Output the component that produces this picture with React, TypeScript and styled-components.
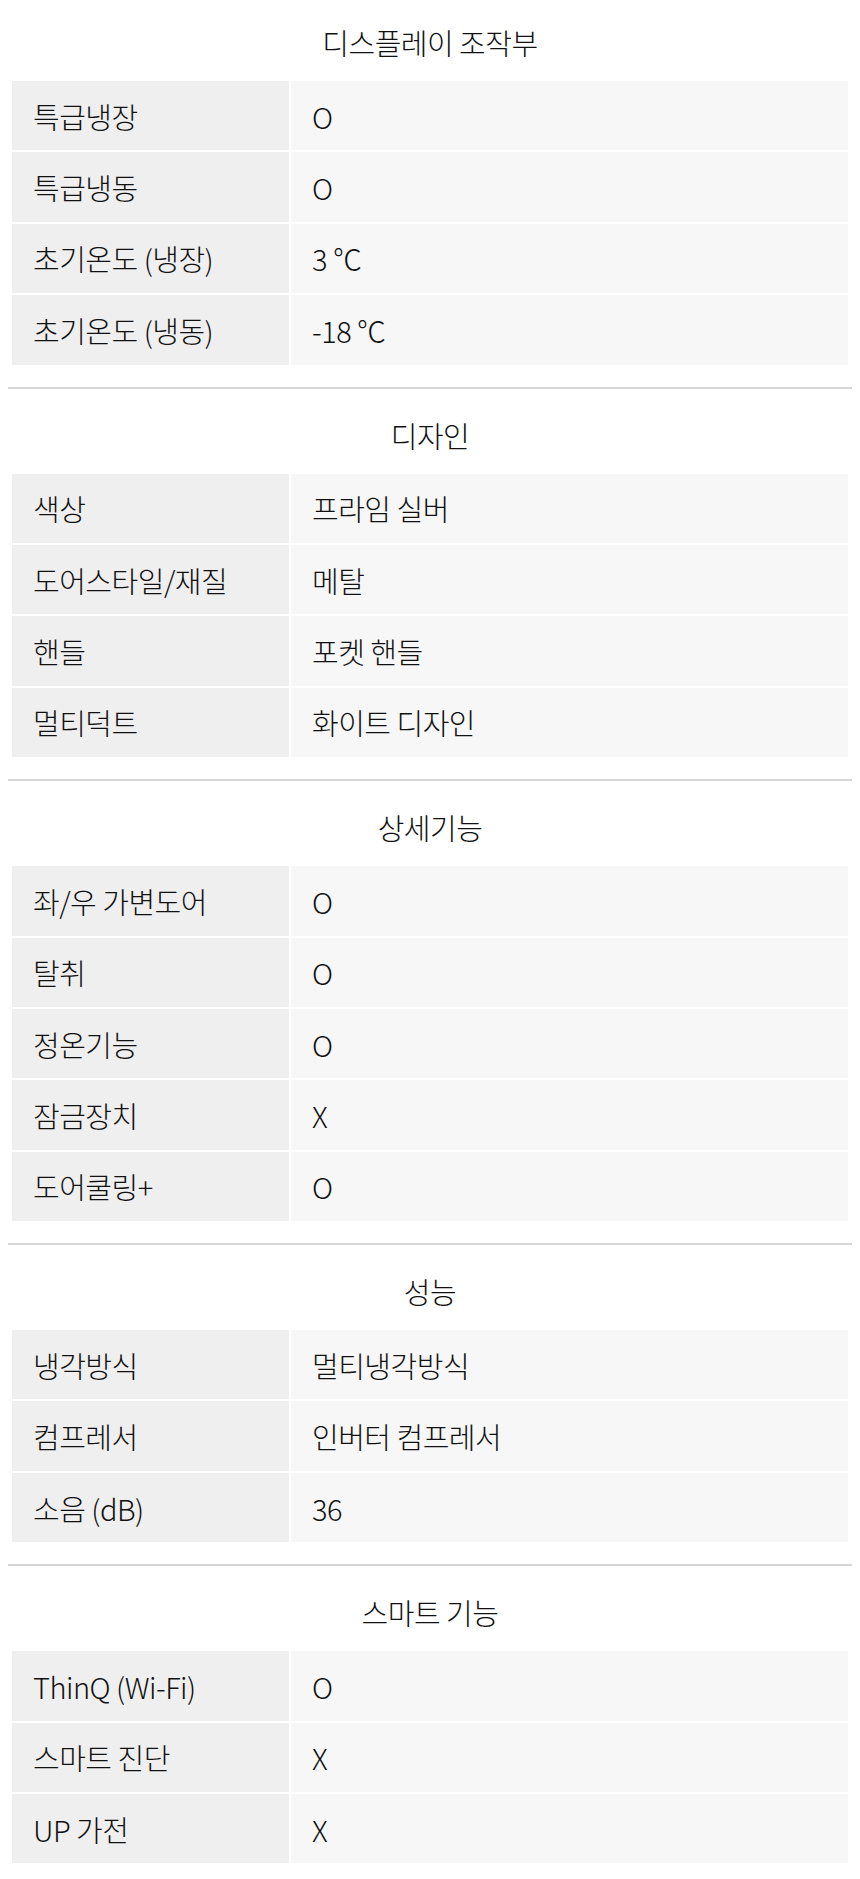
import { Fragment, FunctionComponent } from "react";
import styled, { createGlobalStyle } from "styled-components";

type SpecRow = { label: string; value: string };
type SpecGroup = { title: string; rows: SpecRow[] };

const specs: SpecGroup[] = [
  {
    title: "디스플레이 조작부",
    rows: [
      { label: "특급냉장", value: "O" },
      { label: "특급냉동", value: "O" },
      { label: "초기온도 (냉장)", value: "3 ℃" },
      { label: "초기온도 (냉동)", value: "-18 ℃" },
    ],
  },
  {
    title: "디자인",
    rows: [
      { label: "색상", value: "프라임 실버" },
      { label: "도어스타일/재질", value: "메탈" },
      { label: "핸들", value: "포켓 핸들" },
      { label: "멀티덕트", value: "화이트 디자인" },
    ],
  },
  {
    title: "상세기능",
    rows: [
      { label: "좌/우 가변도어", value: "O" },
      { label: "탈취", value: "O" },
      { label: "정온기능", value: "O" },
      { label: "잠금장치", value: "X" },
      { label: "도어쿨링+", value: "O" },
    ],
  },
  {
    title: "성능",
    rows: [
      { label: "냉각방식", value: "멀티냉각방식" },
      { label: "컴프레서", value: "인버터 컴프레서" },
      { label: "소음 (dB)", value: "36" },
    ],
  },
  {
    title: "스마트 기능",
    rows: [
      { label: "ThinQ (Wi-Fi)", value: "O" },
      { label: "스마트 진단", value: "X" },
      { label: "UP 가전", value: "X" },
    ],
  },
];

const GlobalStyle = createGlobalStyle`
  body {
    margin: 0;
    background: #ffffff;
    font-family: "Noto Sans CJK KR", "Noto Sans", sans-serif;
    color: #111111;
  }
`;

const Page = styled.div`
  width: 860px;
  box-sizing: border-box;
  padding: 0 8px 16px;
  display: flex;
  flex-direction: column;
`;

const Section = styled.section<{ $first?: boolean }>`
  display: flex;
  flex-direction: column;
  padding-top: ${(p) => (p.$first ? "22px" : "26px")};
  padding-bottom: 22px;
  border-top: ${(p) => (p.$first ? "none" : "2px solid #d6d6d6")};

  &:last-child {
    padding-bottom: 0;
  }
`;

const Title = styled.h3`
  margin: 0;
  height: 40px;
  line-height: 40px;
  font-size: 29px;
  font-weight: 300;
  letter-spacing: -0.5px;
  text-align: center;
  color: #111111;
`;

const Table = styled.div`
  margin: 19px 4px 0;
  display: grid;
  grid-template-columns: 277px 1fr;
  grid-auto-rows: 69.4px;
  gap: 2px;
`;

const Cell = styled.div<{ $head?: boolean }>`
  display: flex;
  align-items: center;
  padding: 0 20px 0 21px;
  font-size: 29px;
  font-weight: 300;
  letter-spacing: -0.5px;
  color: #111111;
  background-color: ${(p) => (p.$head ? "#efefef" : "#f7f7f7")};
  white-space: nowrap;
`;

const SpecSection: FunctionComponent<{ group: SpecGroup; first?: boolean }> = ({
  group,
  first,
}) => (
  <Section $first={first}>
    <Title>{group.title}</Title>
    <Table>
      {group.rows.map((row) => (
        <Fragment key={row.label}>
          <Cell $head>{row.label}</Cell>
          <Cell>{row.value}</Cell>
        </Fragment>
      ))}
    </Table>
  </Section>
);

const App: FunctionComponent = () => (
  <>
    <GlobalStyle />
    <Page>
      {specs.map((group, i) => (
        <SpecSection key={group.title} group={group} first={i === 0} />
      ))}
    </Page>
  </>
);

export default App;
